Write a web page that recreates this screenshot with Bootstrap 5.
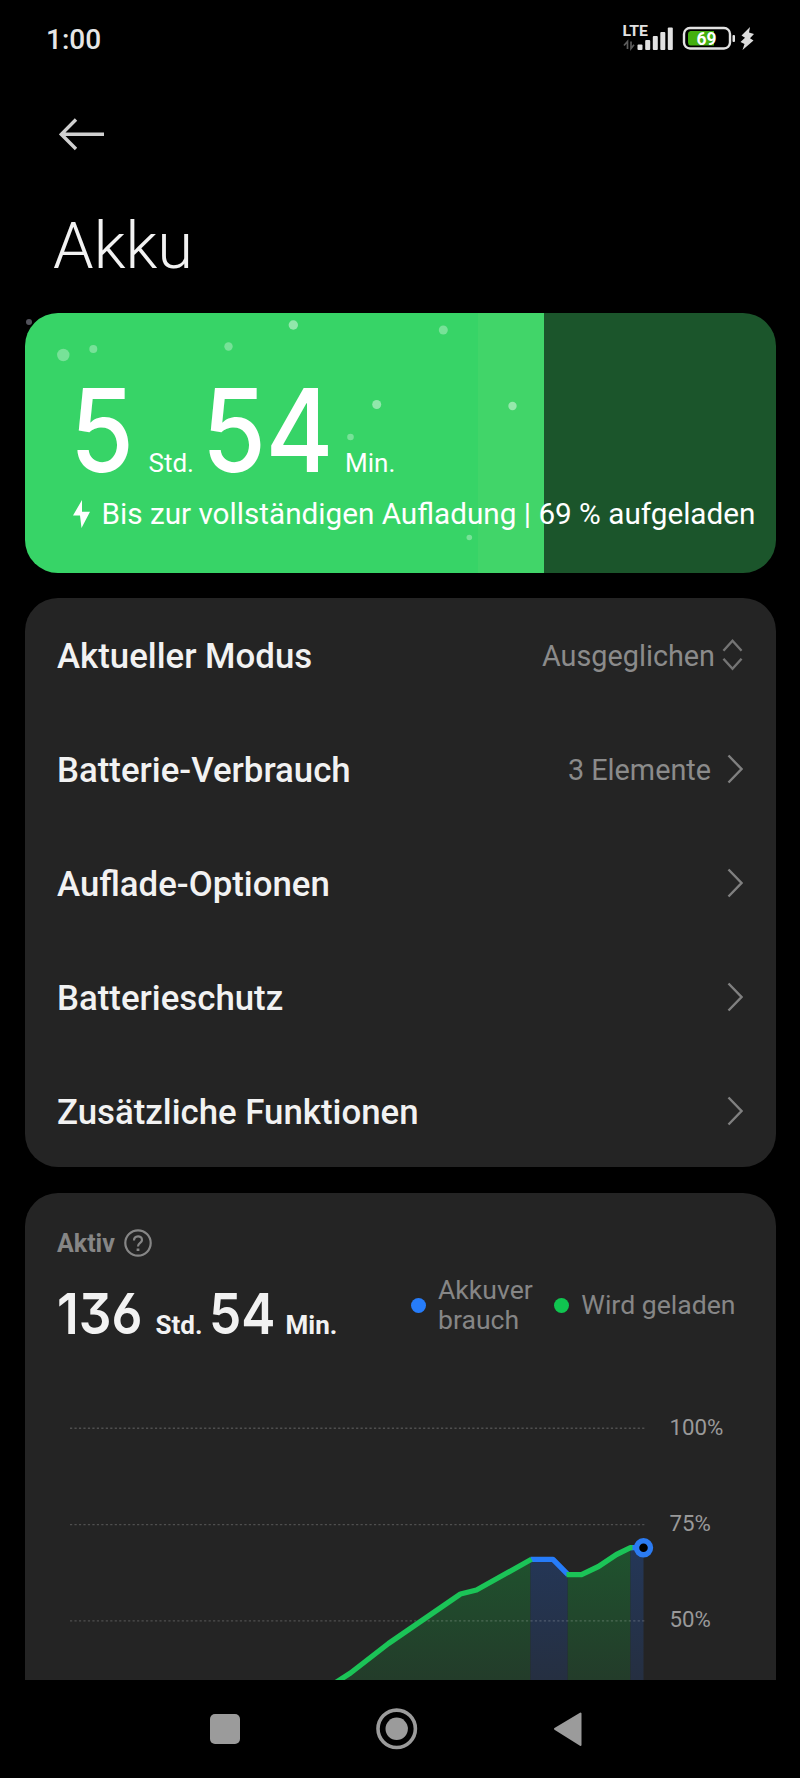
<!DOCTYPE html>
<html lang="de">
<head>
<meta charset="utf-8">
<meta name="viewport" content="width=device-width, initial-scale=1">
<title>Akku</title>
<link href="https://cdn.jsdelivr.net/npm/bootstrap@5.3.0/dist/css/bootstrap.min.css" rel="stylesheet">
<style>
body{background:#000;color:#f2f2f2;font-family:Roboto,sans-serif;height:1778px;overflow:hidden}
svg{display:block;flex:none}
.status{height:80px;padding:0 44px 0 46px}
.clock{font-size:28px;font-weight:500;line-height:80px;color:#e6e6e6}
.topnav{height:108px;padding-left:59px}
.title{font-size:65px;font-weight:300;line-height:117px;height:115px;padding-left:53px;margin:0}
.content{padding:10px 24.5px 0;height:1376.5px;overflow:hidden}
.panel{background:#242424;border-radius:33px;border:0;color:inherit}
.hero{height:259.6px;border-radius:33px;background:linear-gradient(90deg,#37d467 0 453px,#41d569 453px 518.5px,#1b552b 518.5px);color:#fff;padding:58px 0 0 45px}
.bubbles{left:-24.5px;top:-13px;overflow:visible;pointer-events:none}
.num{font-family:Inter,sans-serif;font-weight:500;font-feature-settings:"cv03","cv09";display:inline-block;transform:scaleX(.9);transform-origin:0 50%;white-space:nowrap}
.big .num{font-size:115px;line-height:120px}
.big .num.tail{letter-spacing:-.5px}
.big .unit{font-size:26px}
.hint{font-size:29.7px;line-height:40px;padding-top:3px;white-space:nowrap}
.modes{height:569px;margin-top:25.4px}
.item{height:114px;padding:0 32.5px}
.item .name{font-size:34.8px;font-weight:500;padding-top:3px}
.item .val{font-size:28.8px;color:#8b8b8b;padding-top:4px}
.usage{margin-top:26.5px;height:600px;border-radius:33px 33px 0 0}
.active-label{font-size:25px;font-weight:700;color:#868686;line-height:28px;height:65px;padding:35px 0 0 32.5px}
.mid{height:85px;padding-top:9px}
.mid .num{font-size:57px;font-weight:600;line-height:60px}
.mid .unit{font-size:26px;font-weight:700}
.legend{font-size:26.6px;line-height:30.7px;color:#868686;padding-right:40px}
.dot{width:15px;height:15px;border-radius:50%;flex:none}
.dot.blue{background:#267cf9}.dot.green{background:#10c550}
.sysnav{height:98.5px}
</style>
</head>
<body class="d-flex flex-column">
<header class="status d-flex justify-content-between align-items-center">
  <div class="clock">1:00</div>
  <svg width="136" height="40" viewBox="620 20 136 40" font-family="Roboto,sans-serif">
    <text x="622.5" y="35.5" font-size="15" font-weight="700" fill="#e2e2e2" textLength="25.5" lengthAdjust="spacingAndGlyphs">LTE</text>
    <g stroke="#5c5c5c" stroke-width="1.7" fill="none"><path d="M627.5 49V41.5L624 45.5M631 41.5V48.5L634 44.8"/></g>
    <g fill="#e2e2e2"><rect x="637.5" y="44.5" width="5" height="5.5" rx="1"/><rect x="645.2" y="40" width="5" height="10" rx="1"/><rect x="652.8" y="36" width="5" height="14" rx="1"/><rect x="660.3" y="32" width="5" height="18" rx="1"/><rect x="667.800" y="27.5" width="5" height="22.5" rx="1"/></g>
    <rect x="684" y="28" width="46" height="20.5" rx="6" fill="none" stroke="#e2e2e2" stroke-width="2.4"/>
    <path d="M690.5 31H714V45.5H690.5A3 3 0 0 1 688 42.5V34A3 3 0 0 1 690.5 31Z" fill="#44b010"/>
    <rect x="732.5" y="35" width="2.5" height="7" rx="1" fill="#e2e2e2"/>
    <text x="696.5" y="45" font-size="17.5" font-weight="700" fill="#fff" textLength="20" lengthAdjust="spacingAndGlyphs">69</text>
    <path d="M750 27L741.5 35.5L745 37.8L740.5 42L744.5 44L742.5 50L753.5 40.500L750 38.300L754 34L749 32.500Z" fill="#dcdcdc"/>
  </svg>
</header>
<nav class="topnav d-flex align-items-center">
  <svg width="46" height="34" viewBox="59 117 46 34" fill="none" stroke="#d0d0d0" stroke-width="3.4"><path d="M104 134.300H61.500M76 119.500L61.300 134.300L76 149"/></svg>
</nav>
<h1 class="title">Akku</h1>

<main class="content">
  <section class="hero position-relative">
    <svg class="bubbles position-absolute" width="800" height="280" viewBox="0 300 800 280" fill="#fff">
      <circle cx="29" cy="322" r="3" fill="#53535c"/>
      <g fill-opacity=".32"><circle cx="63.300" cy="355" r="6.200"/><circle cx="93.300" cy="349" r="4"/><circle cx="228.500" cy="346.500" r="4.200"/><circle cx="350.500" cy="437" r="3.300"/><circle cx="443.300" cy="330" r="4.500"/><circle cx="469.300" cy="537.500" r="2.800"/></g>
      <g fill-opacity=".45"><circle cx="293.300" cy="325" r="4.700"/><circle cx="376.700" cy="404.500" r="4.500"/><circle cx="512.500" cy="406" r="4.200"/></g>
    </svg>
    <div class="big d-flex align-items-baseline">
      <span class="num" style="width:79px">5</span><span class="unit" style="width:53px">Std.</span><span class="num tail" style="width:143.500px">54</span><span class="unit">Min.</span>
    </div>
    <div class="hint d-flex align-items-center">
      <svg style="margin:0 12px 0 3px" width="17" height="28" viewBox="0 0 17 28" fill="#fff"><path d="M9 0L0 15.500H7L8.500 28L17 11.800H9Z"/></svg>
      <span>Bis zur vollständigen Aufladung | 69 % aufgeladen</span>
    </div>
  </section>

  <section class="panel modes">
    <div class="item d-flex align-items-center justify-content-between"><span class="name">Aktueller Modus</span>
      <span class="d-flex align-items-center"><span class="val">Ausgeglichen</span><svg style="margin-left:7px" width="21" height="34" viewBox="0 0 22 34" fill="none" stroke="#747474" stroke-width="2.500"><path d="M1.500 12.500L11 2L20.500 12.500M1.500 21L11 31.500L20.500 21"/></svg></span></div>
    <div class="item d-flex align-items-center justify-content-between"><span class="name">Batterie-Verbrauch</span>
      <span class="d-flex align-items-center"><span class="val">3 Elemente</span><svg class="ms-3" width="16" height="30" viewBox="0 0 16 30" fill="none" stroke="#808080" stroke-width="2.400"><path d="M1.500 1.500L14.500 15L1.500 28.500"/></svg></span></div>
    <div class="item d-flex align-items-center justify-content-between"><span class="name">Auflade-Optionen</span>
      <svg width="16" height="30" viewBox="0 0 16 30" fill="none" stroke="#808080" stroke-width="2.400"><path d="M1.500 1.500L14.500 15L1.500 28.500"/></svg></div>
    <div class="item d-flex align-items-center justify-content-between"><span class="name">Batterieschutz</span>
      <svg width="16" height="30" viewBox="0 0 16 30" fill="none" stroke="#808080" stroke-width="2.400"><path d="M1.500 1.500L14.500 15L1.500 28.500"/></svg></div>
    <div class="item d-flex align-items-center justify-content-between"><span class="name">Zusätzliche Funktionen</span>
      <svg width="16" height="30" viewBox="0 0 16 30" fill="none" stroke="#808080" stroke-width="2.400"><path d="M1.500 1.500L14.500 15L1.500 28.500"/></svg></div>
  </section>

  <section class="panel usage">
    <div class="active-label d-flex align-items-center"><span style="padding-top:2px">Aktiv</span>
      <svg style="margin-left:9px" width="28" height="28" viewBox="0 0 28 28" fill="none" stroke="#868686" stroke-width="2.200"><circle cx="14" cy="14" r="12.700"/><path d="M10 11.500C10 6 18 6 18 11C18 14 14 14 14 17.500" /><path d="M14 19.500V22" stroke-width="2.800"/></svg>
    </div>
    <div class="mid d-flex justify-content-between align-items-center">
      <div class="d-flex align-items-baseline" style="padding:18px 0 0 32.500px"><span class="num" style="width:98.500px">136</span><span class="unit" style="width:53px">Std.</span><span class="num" style="width:77px">54</span><span class="unit">Min.</span></div>
      <div class="legend d-flex align-items-center"><i class="dot blue"></i><span style="margin:0 21.500px 0 12px">Akkuver<br>brauch</span><i class="dot green"></i><span style="margin-left:12px">Wird geladen</span></div>
    </div>
    <svg width="751" height="337" viewBox="24.500 1343 751 337" font-family="Roboto,sans-serif">
      <defs>
        <linearGradient id="gg" gradientUnits="userSpaceOnUse" x1="0" y1="1547" x2="0" y2="1680"><stop offset="0" stop-color="#1f532e"/><stop offset="1" stop-color="#233c2a"/></linearGradient>
        <linearGradient id="bg" gradientUnits="userSpaceOnUse" x1="0" y1="1547" x2="0" y2="1680"><stop offset="0" stop-color="#243758"/><stop offset="1" stop-color="#252f41"/></linearGradient>
      </defs>
      <path fill="url(#gg)" d="M341 1680L350 1673L388 1644L460 1594L476 1590L530 1559.300V1680ZM567 1574.700H581L598 1566.500L616 1554.500L630 1547.500V1680H567Z"/>
      <path fill="url(#bg)" d="M530 1559.300H552.500L567 1574.700V1680H530ZM630 1547.500H643V1680H630Z"/>
      <g stroke="#fff" stroke-opacity=".2" stroke-width="1.400" stroke-dasharray="2.200 2.270"><path d="M69.500 1428.200H646M69.500 1524.600H646M69.500 1620.900H646"/></g>
      <g fill="none" stroke-width="5.300" stroke-linejoin="round">
        <path stroke="#267cf9" d="M530 1559.300H552.500L567.500 1574.700M630 1547.700H640"/>
        <path stroke="#1bc457" d="M333 1684L350 1673L388 1643.500L460 1594L476 1590L531 1559.300M566 1574.700H581L598 1566.500L616 1554.500L630 1547.700H632"/>
      </g>
      <circle cx="643" cy="1547.800" r="7" fill="#000" stroke="#2b7bf2" stroke-width="5.400"/>
      <g fill="#999" font-size="22.300"><text x="669" y="1434.500">100%</text><text x="669" y="1530.900">75%</text><text x="669" y="1627.200">50%</text></g>
    </svg>
  </section>
</main>

<footer class="sysnav">
  <svg width="800" height="98" viewBox="0 1679.500 800 98" fill="#9b9b9b"><rect x="210" y="1713.500" width="30" height="30" rx="5"/><circle cx="396.700" cy="1728.300" r="11.200"/><circle cx="396.700" cy="1728.300" r="18.700" fill="none" stroke="#9b9b9b" stroke-width="3.600"/><path d="M555 1728.400L580.500 1713V1744.500Z" stroke="#9b9b9b" stroke-width="2" stroke-linejoin="round"/></svg>
</footer>
<script src="https://cdn.jsdelivr.net/npm/bootstrap@5.3.0/dist/js/bootstrap.bundle.min.js"></script>
</body>
</html>
